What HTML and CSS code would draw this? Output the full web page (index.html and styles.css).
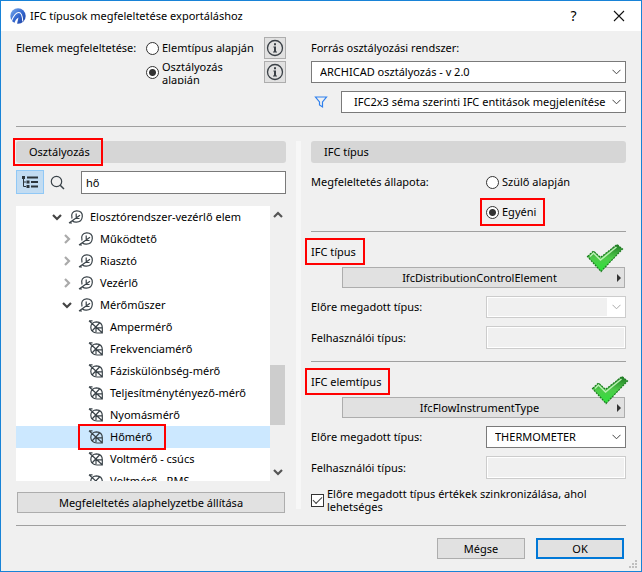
FILE: index.html
```html
<!DOCTYPE html>
<html lang="hu">
<head>
<meta charset="utf-8">
<title>IFC típusok megfeleltetése exportáláshoz</title>
<link rel="stylesheet" href="styles.css">
</head>
<body>
<svg class="defs" aria-hidden="true">
  <defs>
    <linearGradient id="tickFill" x1="0" y1="0" x2="0" y2="1">
      <stop offset="0" stop-color="#1f7a24"/>
      <stop offset=".5" stop-color="#4fcb4a"/>
      <stop offset="1" stop-color="#2be33a"/>
    </linearGradient>
    <linearGradient id="logoFill" x1="0" y1="0" x2="1" y2="1">
      <stop offset="0" stop-color="#7fb0f0"/>
      <stop offset=".5" stop-color="#3568cf"/>
      <stop offset="1" stop-color="#1c3f9f"/>
    </linearGradient>
    <symbol id="info" viewBox="0 0 18 18">
      <circle cx="9" cy="9" r="7.5" fill="none" stroke="#3a4046" stroke-width="1.3"/>
      <path d="M8 4.2h2v2H8zM7.4 7.5H10v5h1v1H7v-1h1v-4h-.6z" fill="#3a4046"/>
    </symbol>
    <symbol id="leaf" viewBox="0 0 16 16">
      <path d="M1 14 12 6.200M4 9.500C2.500 5 5 2 8.500 1.800 12.500 1.600 14.500 4 14.300 7.500 14 11 11.500 13.300 8 13.200 6.500 13.100 5.500 12.800 4.500 12M8.200 4.500V9M7.500 9.500H11.500M1 14H4" fill="none" stroke="#3a4349" stroke-width="1.200"/>
    </symbol>
    <symbol id="leafoff" viewBox="0 0 16 16">
      <path d="M2.800 8.500C2.500 5 5.500 2.800 8.500 2.800 12 3 14.300 5 14.300 8.500V14H9C5.500 13.800 3 12 2.800 8.500ZM1 1.800 14.500 14M1 1.800H4.500M4 12 11.500 4M8 8V13M9 8.800H14" fill="none" stroke="#3a4349" stroke-width="1.200"/>
    </symbol>
    <symbol id="tick" viewBox="0 0 38 30">
      <path d="M1.500 13.500 7.500 8 14.500 14.500 31 1.500 36.500 6 15 28.500Z" fill="url(#tickFill)" stroke="#1d7a20" stroke-width="1.200" stroke-dasharray="2 1"/>
      <path d="M4 13.500 7.500 10 14.500 17 30.500 4" fill="none" stroke="#b9efb2" stroke-width="1.500"/>
    </symbol>
    <symbol id="down" viewBox="0 0 10 10"><path d="M1 3 5 7 9 3" fill="none" stroke="currentColor" stroke-width="2.200"/></symbol>
    <symbol id="right" viewBox="0 0 10 10"><path d="M3 1 7 5 3 9" fill="none" stroke="currentColor" stroke-width="2.200"/></symbol>
  </defs>
</svg>
<main class="window">
  <header class="titlebar">
    <svg class="logo" viewBox="0 0 16 16" aria-hidden="true">
      <circle cx="8" cy="8" r="7.700" fill="url(#logoFill)"/>
      <path d="M1.500 13C3.500 8 6 4.500 8.800 4.500 11.500 4.500 12.500 8.500 12.800 13.500" fill="none" stroke="#fff" stroke-width="1.100"/>
      <path d="M4 16C5 12.500 6.500 10.500 8.500 9.500L7 16Z" fill="#fff"/>
    </svg>
    <h1 class="title">IFC típusok megfeleltetése exportáláshoz</h1>
    <button class="caption help" type="button">?</button>
    <button class="caption" type="button" aria-label="Bezárás"><svg width="12" height="12" viewBox="0 0 12 12"><path d="M1 1 11 11M11 1 1 11" stroke="#111" stroke-width="1.100"/></svg></button>
  </header>

  <section class="top">
    <div class="mapping">
      <span class="lead">Elemek megfeleltetése:</span>
      <label class="choice"><input type="radio" name="mapping">Elemtípus alapján</label>
      <button class="infobtn" type="button" aria-label="Információ"><svg width="18" height="18"><use href="#info"/></svg></button>
      <label class="choice wrapped"><input type="radio" name="mapping" checked><span>Osztályozás alapján</span></label>
      <button class="infobtn" type="button" aria-label="Információ"><svg width="18" height="18"><use href="#info"/></svg></button>
    </div>
    <div class="source">
      <label class="sourcelabel" for="system">Forrás osztályozási rendszer:</label>
      <select id="system"><option>ARCHICAD osztályozás - v 2.0</option></select>
      <div class="filter">
        <svg width="14" height="14" viewBox="0 0 14 14" aria-hidden="true"><path d="M1.500 2H12.500L8.500 7V12L5.500 10V7Z" fill="none" stroke="#2f80ed" stroke-width="1.200"/></svg>
        <select class="schema" aria-label="Séma"><option>IFC2x3 séma szerinti IFC entitások megjelenítése</option></select>
      </div>
    </div>
  </section>

  <section class="panes">
    <div class="left">
      <h2 class="bar marked"><span class="mark">Osztályozás</span></h2>
      <div class="search">
        <button class="treebtn" type="button" aria-label="Fa nézet"><svg width="18" height="14" viewBox="0 0 18 14"><path d="M1 1h3v3H1zM5.500 5.500h3v3h-3zM5.500 10h3v3h-3zM6 1.500h11v2H6zM10 6h7v2h-7zM10 10.500h7v2h-7z" fill="#2b343b"/><path d="M2.500 4V11.500H5M2.500 7H5" fill="none" stroke="#2b343b"/></svg></button>
        <svg class="lens" width="15" height="15" viewBox="0 0 15 15" aria-hidden="true"><circle cx="6.500" cy="6.500" r="5.200" fill="none" stroke="#3a4349" stroke-width="1.200"/><path d="M10.200 10.200 14 14" stroke="#3a4349" stroke-width="1.500"/></svg>
        <input class="field" type="text" value="hő" aria-label="Keresés">
      </div>
      <div class="listbox">
        <ul class="tree">
          <li class="row l1"><svg class="tw open"><use href="#down"/></svg><svg class="ic"><use href="#leaf"/></svg>Elosztórendszer-vezérlő elem</li>
          <li class="row l2"><svg class="tw"><use href="#right"/></svg><svg class="ic"><use href="#leaf"/></svg>Működtető</li>
          <li class="row l2"><svg class="tw"><use href="#right"/></svg><svg class="ic"><use href="#leaf"/></svg>Riasztó</li>
          <li class="row l2"><svg class="tw"><use href="#right"/></svg><svg class="ic"><use href="#leaf"/></svg>Vezérlő</li>
          <li class="row l2"><svg class="tw open"><use href="#down"/></svg><svg class="ic"><use href="#leaf"/></svg>Mérőműszer</li>
          <li class="row l3"><svg class="ic"><use href="#leafoff"/></svg>Ampermérő</li>
          <li class="row l3"><svg class="ic"><use href="#leafoff"/></svg>Frekvenciamérő</li>
          <li class="row l3"><svg class="ic"><use href="#leafoff"/></svg>Fáziskülönbség-mérő</li>
          <li class="row l3"><svg class="ic"><use href="#leafoff"/></svg>Teljesítménytényező-mérő</li>
          <li class="row l3"><svg class="ic"><use href="#leafoff"/></svg>Nyomásmérő</li>
          <li class="row l3 selected"><span class="mark rowmark"><svg class="ic"><use href="#leafoff"/></svg>Hőmérő</span></li>
          <li class="row l3"><svg class="ic"><use href="#leafoff"/></svg>Voltmérő - csúcs</li>
          <li class="row l3"><svg class="ic"><use href="#leafoff"/></svg>Voltmérő - RMS</li>
        </ul>
        <div class="scroll" aria-hidden="true">
          <svg class="arrow up"><use href="#down"/></svg>
          <div class="track"><div class="thumb"></div></div>
          <svg class="arrow"><use href="#down"/></svg>
        </div>
      </div>
      <button class="btn reset" type="button">Megfeleltetés alaphelyzetbe állítása</button>
    </div>
    <div class="divider"></div>
    <div class="right">
      <h2 class="bar"><span>IFC típus</span></h2>
      <div class="line state"><span>Megfeleltetés állapota:</span><label class="choice"><input type="radio" name="state">Szülő alapján</label></div>
      <div class="line custom"><span></span><label class="choice mark"><input type="radio" name="state" checked>Egyéni</label></div>
      <hr class="rule">
      <h3 class="sub"><span class="mark">IFC típus</span></h3>
      <div class="pick"><button class="btn" type="button">IfcDistributionControlElement<span class="tri"></span></button><svg class="tick"><use href="#tick"/></svg></div>
      <div class="line"><label for="p1">Előre megadott típus:</label><select id="p1" disabled><option></option></select></div>
      <div class="line"><label for="u1">Felhasználói típus:</label><input class="field" id="u1" type="text" disabled></div>
      <hr class="rule">
      <h3 class="sub"><span class="mark">IFC elemtípus</span></h3>
      <div class="pick second"><button class="btn" type="button">IfcFlowInstrumentType<span class="tri"></span></button><svg class="tick"><use href="#tick"/></svg></div>
      <div class="line"><label for="p2">Előre megadott típus:</label><select id="p2"><option>THERMOMETER</option></select></div>
      <div class="line"><label for="u2">Felhasználói típus:</label><input class="field" id="u2" type="text" disabled></div>
      <label class="sync"><input type="checkbox" checked><span>Előre megadott típus értékek szinkronizálása, ahol lehetséges</span></label>
    </div>
  </section>

  <footer class="footer">
    <button class="btn" type="button">Mégse</button>
    <button class="btn ok" type="button">OK</button>
    <svg class="grip" width="8" height="8" viewBox="0 0 8 8" aria-hidden="true"><path d="M6 0h2v2H6zM3 3h2v2H3zM6 3h2v2H6zM0 6h2v2H0zM3 6h2v2H3zM6 6h2v2H6z" fill="#bfbfbf"/></svg>
  </footer>
</main>
</body>
</html>
```
FILE: styles.css
```css
* { box-sizing: border-box; }
body { margin: 0; font: 11px/16px "Noto Sans", "Open Sans", sans-serif; color: #000; }
button, input, select { font: inherit; color: inherit; margin: 0; }
h1, h2, h3 { margin: 0; font: inherit; }
svg { display: block; flex: none; }
.defs { position: absolute; width: 0; height: 0; }

.window { min-height: 100vh; border: 1px solid #1883d7; background: #f0f0f0; }

.titlebar { display: flex; align-items: center; height: 30px; padding-left: 9px; background: #fff; }
.logo { width: 16px; height: 16px; }
.title { flex: 1; margin-left: 4px; }
.caption { display: grid; place-items: center; width: 45px; height: 28px; padding: 0; border: 0; background: none; }
.help { font-size: 14px; }

.top { display: grid; grid-template-columns: 270fr 315fr; gap: 25px; margin: 0 15px; padding-top: 6px; height: 96px; border-bottom: 1px solid #a0a0a0; }
.mapping { display: grid; grid-template-columns: 130px 1fr 22px; grid-auto-rows: 22px; row-gap: 2px; align-items: center; }
.lead { grid-column: 1; white-space: nowrap; }
.choice { display: flex; align-items: center; gap: 3px; white-space: nowrap; }
.wrapped { grid-column: 2; height: 24px; line-height: 13px; overflow: hidden; }
.wrapped span { width: 80px; align-self: flex-start; white-space: normal; }
.infobtn { display: grid; place-items: center; width: 22px; height: 22px; padding: 0; border: 1px solid #adadad; background: #e1e1e1; }
.sourcelabel { display: block; line-height: 22px; margin-bottom: 2px; }
.filter { display: flex; align-items: center; justify-content: space-between; gap: 13px; margin-top: 8px; padding-left: 3px; }
.schema { flex: 1; min-width: 0; }

input[type="radio"] { appearance: none; flex: none; width: 13px; height: 13px; border: 1px solid #333; border-radius: 50%; background: #fff; }
input[type="radio"]:checked { background: radial-gradient(circle, #333 0 3px, #fff 4px); }
input[type="checkbox"] { appearance: none; flex: none; width: 13px; height: 13px; border: 1px solid #333; background: #fff; display: grid; place-items: center; }
input[type="checkbox"]::after { content: ""; width: 8px; height: 4px; border: solid #444; border-width: 0 0 1px 1px; transform: rotate(-45deg) translate(1px, -1px); }

select { appearance: none; display: block; width: 100%; height: 22px; padding: 0 20px 0 8px; border: 1px solid #7a7a7a; border-radius: 0; color: #000; opacity: 1;
  background: url("data:image/svg+xml,%3Csvg xmlns='http://www.w3.org/2000/svg' width='9' height='6'%3E%3Cpath d='M.5 .8 4.500 4.800 8.500 .8' fill='none' stroke='%23444'/%3E%3C/svg%3E") no-repeat right 4px center #fff; }
select.schema { padding-left: 12px; padding-right: 14px; }
select:disabled { border-color: #ccc; box-shadow: inset 0 0 0 1px #fff;
  background: url("data:image/svg+xml,%3Csvg xmlns='http://www.w3.org/2000/svg' width='9' height='6'%3E%3Cpath d='M.5 .8 4.500 4.800 8.500 .8' fill='none' stroke='%23aaa'/%3E%3C/svg%3E") no-repeat right 4px center, linear-gradient(#fff, #fff) no-repeat right / 18px 100% #f0f0f0; }
.field { display: block; min-width: 0; width: 100%; height: 23px; padding: 0 4px; border: 1px solid #7a7a7a; background: #fff; }
.field:disabled { border-color: #ccc; box-shadow: inset 0 0 0 1px #fff; background: #f0f0f0; }

.btn { position: relative; width: 100%; height: 21px; padding: 0; border: 1px solid #adadad; background: #e1e1e1; text-align: center; line-height: 18px; }

.panes { display: grid; grid-template-columns: 270fr 5px 315fr; column-gap: 10px; margin: 0 15px; padding: 14px 0 12px; border-bottom: 1px solid #a0a0a0; }
.divider { background: #f7f7f7; margin-bottom: 4px; }
.bar { display: flex; align-items: center; height: 22px; padding-left: 13px; border-radius: 3px; background: #d6d6d6; }
.mark { outline: 2px solid #f00; outline-offset: 4px; }
.marked { padding-left: 0; }
.marked .mark { padding: 3px 10px 3px 13px; outline-offset: 1px; }

.search { display: grid; grid-template-columns: 28px 15px 1fr; align-items: center; margin-top: 7px; column-gap: 6px; }
.treebtn { display: grid; place-items: center; width: 28px; height: 24px; padding: 0; border: 1px solid #90c8f6; background: #c2dcf2; }
.search .field { justify-self: end; width: calc(100% - 10px); }
.listbox { display: flex; height: 275px; margin-top: 12px; }
.tree { flex: 1; margin: 0; padding: 0; list-style: none; background: #fff; overflow: hidden; }
.row { display: flex; align-items: center; height: 22px; white-space: nowrap; gap: 6px; }
.l1 { padding-left: 36px; }
.l2 { padding-left: 46px; }
.l3 { padding-left: 72px; }
.tw { width: 10px; height: 10px; color: #aaa; }
.open { color: #444; }
.ic { width: 16px; height: 16px; }
.selected { padding-left: 64px; background: #cce8ff; }
.rowmark { display: flex; align-items: center; gap: 6px; height: 22px; padding: 0 12px 0 8px; outline-offset: 0; }
.scroll { display: flex; flex-direction: column; align-items: center; width: 16px; padding: 4px 0; color: #555; }
.arrow { width: 10px; height: 10px; }
.up { transform: rotate(180deg); }
.track { flex: 1; display: flex; width: 15px; align-self: flex-start; align-items: flex-end; padding-bottom: 42px; }
.thumb { width: 100%; height: 60px; background: #cdcdcd; }
.reset { display: block; margin: 11px 1px 0; width: calc(100% - 2px); }

.line { display: grid; grid-template-columns: 175fr 140fr; align-items: center; min-height: 22px; margin-bottom: 8px; }
.state { margin-top: 8px; }
.custom { margin-bottom: 4px; }
.custom .choice { justify-self: start; padding-right: 3px; }
.rule { height: 1px; margin: 12px 0 11px; border: 0; background: #a0a0a0; }
.custom + .rule { margin-top: 8px; }
.sub { line-height: 17px; }
.sub .mark { padding-right: 3px; }
.pick { position: relative; margin: 7px 1px 8px 31px; }
.pick .btn { padding-right: 8px; }
.tri { position: absolute; right: 3px; top: 6px; border: solid transparent; border-width: 4px 0 4px 4px; border-left-color: #333; }
.tick { position: absolute; right: 1px; top: -24px; width: 38px; height: 30px; }
.second .tick { right: -4px; top: -22px; }
.sync { display: flex; align-items: center; gap: 3px; line-height: 13px; }

.footer { position: relative; display: flex; justify-content: flex-end; gap: 11px; padding: 12px 17px 11px; }
.footer .btn { width: 88px; }
.footer .ok { border: 2px solid #0078d7; line-height: 16px; }
.grip { position: absolute; right: 4px; bottom: 2px; }
```
